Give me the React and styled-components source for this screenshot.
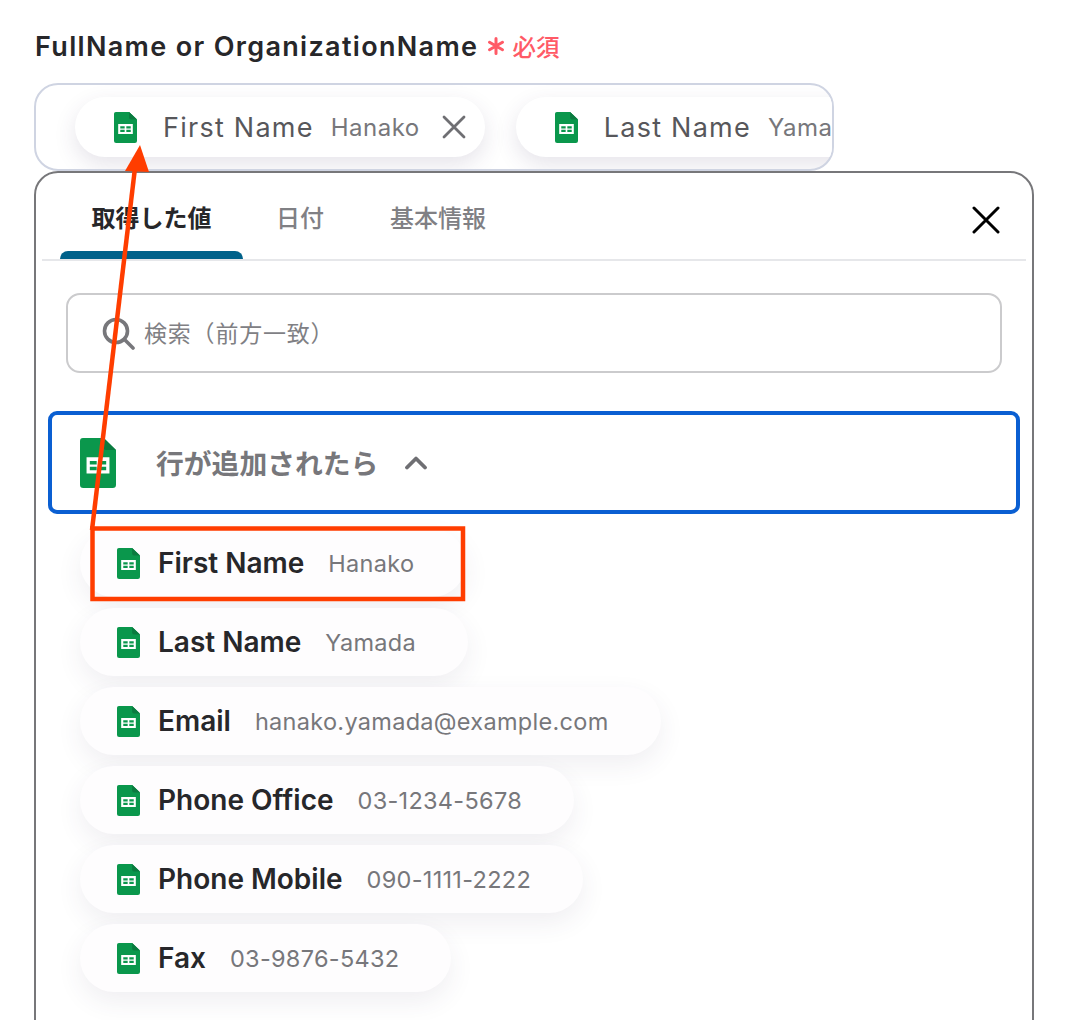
import React from "react";
import styled, { createGlobalStyle } from "styled-components";

const Global = createGlobalStyle`
  html, body { margin: 0; padding: 0; background: #fff; }
  body { font-family: Inter, "Noto Sans CJK JP", sans-serif; }
`;

const Page = styled.div`
  position: relative;
  width: 1072px;
  height: 1020px;
  overflow: hidden;
  box-sizing: border-box;
  padding: 27px 38px 0 34px;
  background: #fff;
`;

const LabelRow = styled.div`
  display: flex;
  align-items: center;
  height: 38px;
  margin-bottom: 18px;
  padding-left: 1px;
`;

const Label = styled.span`
  font-size: 27px;
  font-weight: 600;
  letter-spacing: 1.33px;
  color: #27272a;
  white-space: nowrap;
`;

const Star = styled.span`
  display: flex;
  margin-left: 9px;
  color: #ff5a66;
`;

const Required = styled.span`
  margin-left: 7px;
  font-size: 23.5px;
  color: #ff5a66;
  font-weight: 500;
`;

const Field = styled.div`
  box-sizing: border-box;
  width: 800px;
  height: 88px;
  border: 2px solid #cfd4e2;
  border-radius: 24px;
  display: flex;
  gap: 31px;
  align-items: flex-start;
  padding: 12px 0 0 39px;
  overflow: hidden;
  background: #fff;
`;

const FieldChip = styled.div`
  flex: none;
  display: flex;
  align-items: center;
  height: 60px;
  box-sizing: border-box;
  padding: 0 19px 0 39px;
  border-radius: 30px;
  background: #fff;
  box-shadow: 0 8px 22px rgba(60, 50, 90, 0.13);
`;

const FieldChipName = styled.span`
  margin-left: 26px;
  font-size: 27px;
  letter-spacing: 1.25px;
  color: #57575b;
  white-space: nowrap;
`;

const FieldChipValue = styled.span`
  margin-left: 17px;
  font-size: 24px;
  letter-spacing: 0.5px;
  color: #77777b;
  white-space: nowrap;
`;

const ChipClose = styled.span`
  display: flex;
  margin-left: 22px;
  color: #6f6f73;
`;

const Panel = styled.div`
  box-sizing: border-box;
  height: 900px;
  border: 2px solid #77777a;
  border-radius: 24px 24px 0 0;
  padding: 0 6px;
  background: #fff;
`;

const TabBar = styled.div`
  display: flex;
  height: 88px;
  box-sizing: border-box;
  border-bottom: 2px solid #e6e7ea;
  padding-left: 18px;
`;

const Tab = styled.div`
  position: relative;
  box-sizing: border-box;
  width: ${(p) => p.$w}px;
  display: flex;
  justify-content: center;
  padding-top: 29px;
  font-size: 24px;
  line-height: 34px;
  font-weight: ${(p) => (p.$active ? 700 : 500)};
  color: ${(p) => (p.$active ? "#27272a" : "#808084")};

  &::after {
    content: "";
    display: ${(p) => (p.$active ? "block" : "none")};
    position: absolute;
    left: 0;
    right: 0;
    bottom: 0;
    height: 8px;
    background: #00618a;
    border-radius: 8px 8px 0 0;
  }
`;

const CloseButton = styled.span`
  margin-left: auto;
  margin-right: 26px;
  margin-top: 33px;
  display: flex;
  height: 28px;
  color: #000;
`;

const Search = styled.div`
  box-sizing: border-box;
  display: flex;
  align-items: center;
  margin: 32px 24px 0 24px;
  height: 80px;
  border: 2px solid #cbcbcd;
  border-radius: 14px;
  padding-left: 34px;
`;

const SearchText = styled.span`
  margin-left: 9px;
  padding-bottom: 3px;
  font-size: 23px;
  letter-spacing: 0.8px;
  color: #808084;
  font-weight: 400;
`;

const Accordion = styled.div`
  box-sizing: border-box;
  display: flex;
  align-items: center;
  margin: 38px 6px 0 6px;
  height: 103px;
  border: 4px solid #0a5fd2;
  border-radius: 9px;
  padding-left: 28px;
`;

const AccordionTitle = styled.span`
  margin-left: 40px;
  padding-bottom: 2px;
  font-size: 27.8px;
  font-weight: 600;
  color: #77777b;
`;

const Chevron = styled.span`
  display: flex;
  margin-left: 26px;
  color: #6f6f73;
`;

const List = styled.div`
  display: flex;
  flex-direction: column;
  align-items: flex-start;
  gap: 11px;
  margin: 15px 0 0 38px;
`;

const Item = styled.div`
  box-sizing: border-box;
  display: flex;
  align-items: center;
  height: 68px;
  padding: 0 52px 0 37px;
  border-radius: 34px;
  background: #fefdfe;
  box-shadow: 0 10px 26px rgba(60, 50, 90, 0.08);
`;

const ItemName = styled.span`
  margin-left: 18px;
  font-size: 28px;
  font-weight: 600;
  color: #27272a;
  white-space: nowrap;
`;

const ItemValue = styled.span`
  margin-left: 24px;
  font-size: 23.5px;
  letter-spacing: 0.3px;
  color: #77777b;
  white-space: nowrap;
`;

const Overlay = styled.svg`
  position: absolute;
  inset: 0;
  pointer-events: none;
`;

const SheetIcon = ({ w = 23, h = 31 }) => (
  <svg width={w} height={h} viewBox="0 0 22 31" preserveAspectRatio="none" style={{ flex: "none" }}>
    <path d="M1.8 0H14.5L22 7.5V29a2 2 0 0 1-2 2H2a2 2 0 0 1-2-2V1.8A1.8 1.8 0 0 1 1.8 0Z" fill="#0a974c" />
    <path d="M14.5 0 22 7.5h-5.7a1.8 1.8 0 0 1-1.8-1.8Z" fill="#0a7a3f" />
    <path fillRule="evenodd" d="M4 12h14v10H4ZM6 14.2v2.2h4.2v-2.2ZM11.8 14.2v2.2H16v-2.2ZM6 17.8v2.2h4.2v-2.2ZM11.8 17.8v2.2H16v-2.2Z" fill="#fff" />
  </svg>
);

const items = [
  ["First Name", "Hanako"],
  ["Last Name", "Yamada"],
  ["Email", "hanako.yamada@example.com"],
  ["Phone Office", "03-1234-5678"],
  ["Phone Mobile", "090-1111-2222"],
  ["Fax", "03-9876-5432"],
];

export default function App() {
  return (
    <Page>
      <Global />
      <LabelRow>
        <Label>FullName or OrganizationName</Label>
        <Star>
          <svg width="18" height="18" viewBox="0 0 18 18" fill="none" stroke="currentColor" strokeWidth="3" strokeLinecap="round">
            <path d="M9 1.5v15M2.5 5.2l13 7.6M15.5 5.2l-13 7.6" />
          </svg>
        </Star>
        <Required>必須</Required>
      </LabelRow>

      <Field>
        <FieldChip>
          <SheetIcon />
          <FieldChipName>First Name</FieldChipName>
          <FieldChipValue>Hanako</FieldChipValue>
          <ChipClose>
            <svg width="24" height="24" viewBox="0 0 24 24" stroke="currentColor" strokeWidth="2.8" strokeLinecap="round">
              <path d="M2 2l20 20M22 2 2 22" />
            </svg>
          </ChipClose>
        </FieldChip>
        <FieldChip>
          <SheetIcon />
          <FieldChipName>Last Name</FieldChipName>
          <FieldChipValue>Yamada</FieldChipValue>
        </FieldChip>
      </Field>

      <Panel>
        <TabBar>
          <Tab $w={183} $active>取得した値</Tab>
          <Tab $w={114}>日付</Tab>
          <Tab $w={162}>基本情報</Tab>
          <CloseButton>
            <svg width="28" height="28" viewBox="0 0 28 28" stroke="currentColor" strokeWidth="3" strokeLinecap="round">
              <path d="M2 2l24 24M26 2 2 26" />
            </svg>
          </CloseButton>
        </TabBar>

        <Search>
          <svg width="33" height="33" viewBox="0 0 33 33" fill="none" stroke="#77777b" strokeWidth="3.6" strokeLinecap="round" style={{ flex: "none" }}>
            <circle cx="14" cy="14" r="11.5" />
            <path d="M22.5 22.5 31 31" />
          </svg>
          <SearchText>検索（前方一致）</SearchText>
        </Search>

        <Accordion>
          <SheetIcon w={36} h={50} />
          <AccordionTitle>行が追加されたら</AccordionTitle>
          <Chevron>
            <svg width="24" height="15" viewBox="0 0 24 15" fill="none" stroke="currentColor" strokeWidth="3.8" strokeLinecap="round" strokeLinejoin="round">
              <path d="M3 12.5 12 3.5l9 9" />
            </svg>
          </Chevron>
        </Accordion>

        <List>
          {items.map(([name, value]) => (
            <Item key={name}>
              <SheetIcon />
              <ItemName>{name}</ItemName>
              <ItemValue>{value}</ItemValue>
            </Item>
          ))}
        </List>
      </Panel>

      <Overlay width="1072" height="1020" viewBox="0 0 1072 1020">
        <rect x="92.5" y="528.5" width="370.5" height="70.5" fill="none" stroke="#ff3d00" strokeWidth="4.5" />
        <path d="M92 530 135 168" fill="none" stroke="#ff3d00" strokeWidth="4.5" />
        <path d="M140 145 125 171 149 172Z" fill="#ff3d00" />
      </Overlay>
    </Page>
  );
}
